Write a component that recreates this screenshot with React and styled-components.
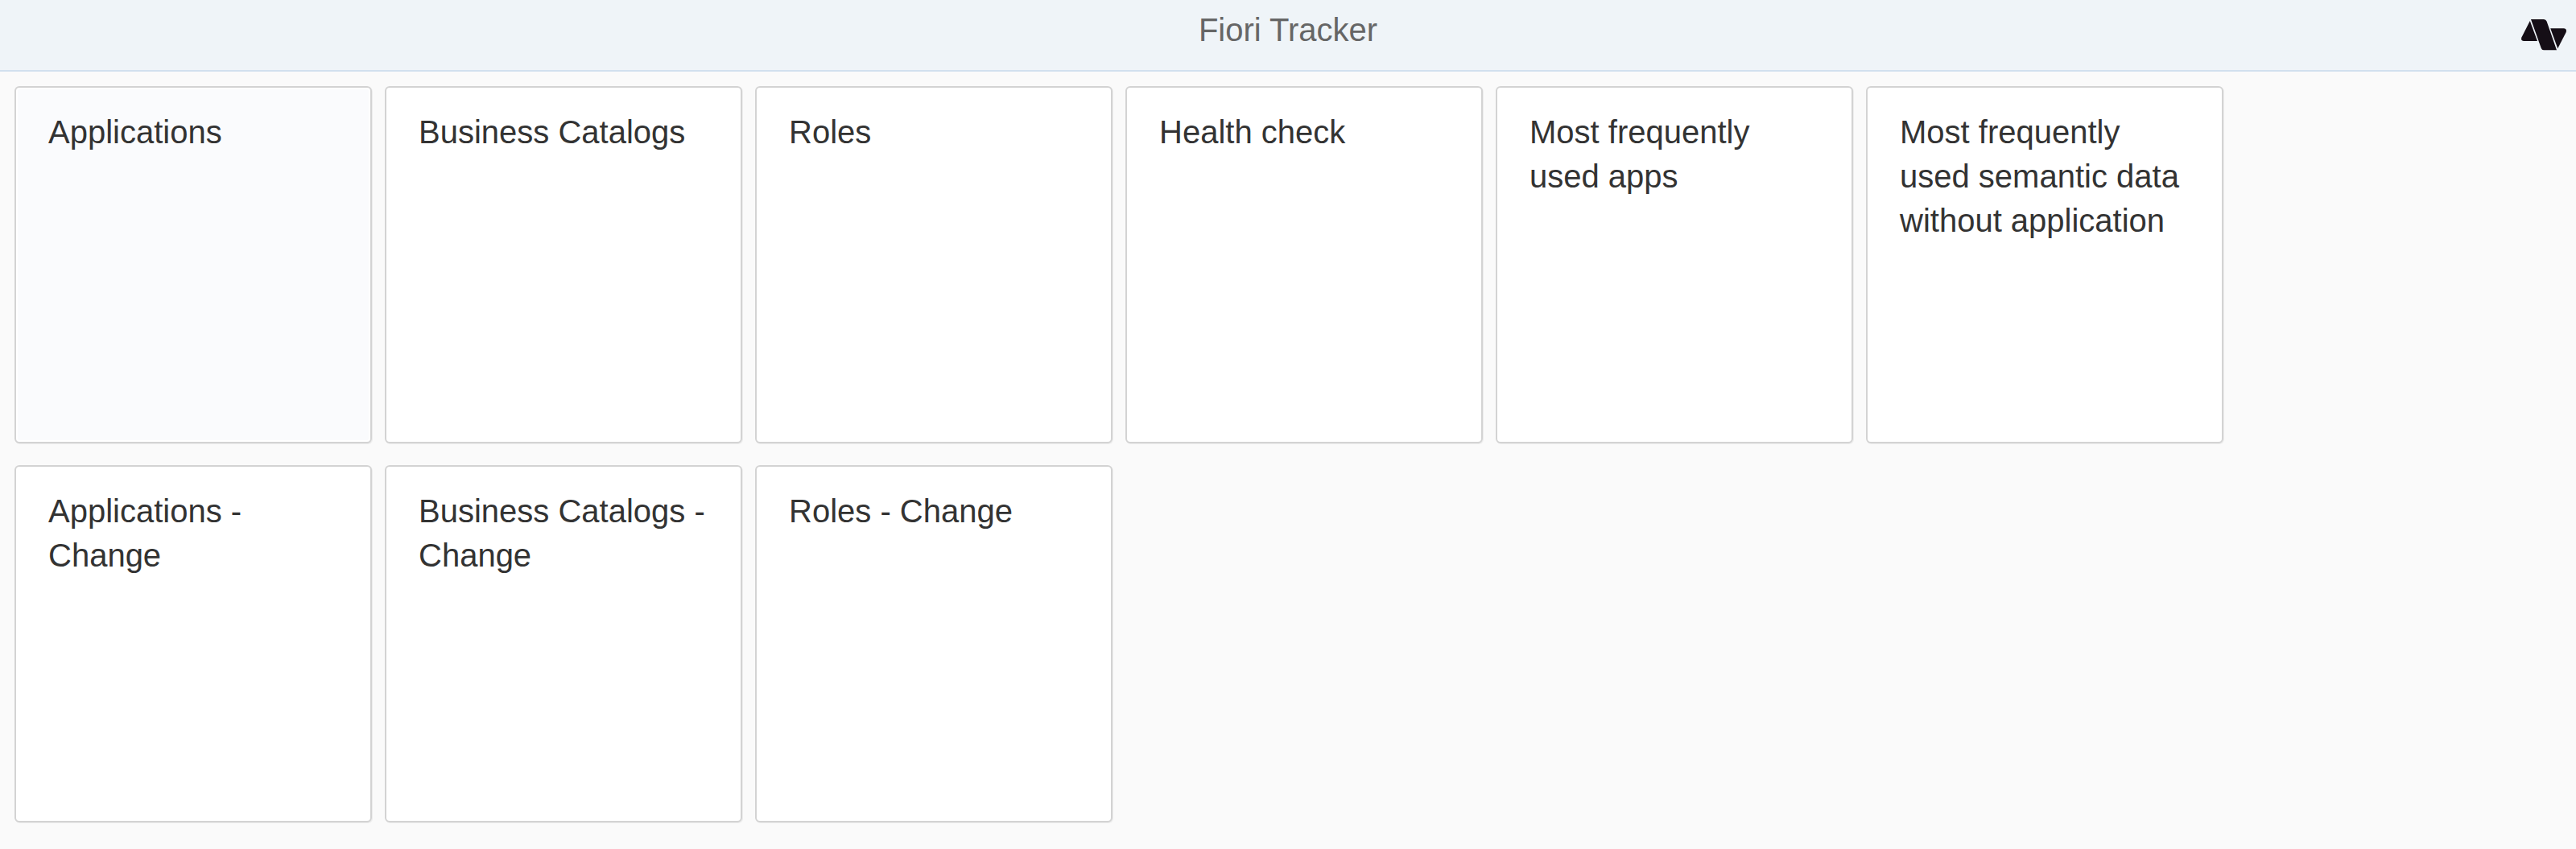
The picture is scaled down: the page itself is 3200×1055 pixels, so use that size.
import React from "react";
import styled, { createGlobalStyle } from "styled-components";

const GlobalStyle = createGlobalStyle`
  body {
    margin: 0;
    background: #fafafa;
    font-family: "Liberation Sans", Arial, sans-serif;
  }
`;

const Page = styled.div`
  display: flex;
  flex-direction: column;
  min-height: 1055px;
`;

const Header = styled.header`
  display: grid;
  grid-template-columns: 1fr auto 1fr;
  box-sizing: border-box;
  height: 89px;
  background: #eff4f8;
  border-bottom: 2px solid #d1e0ee;
`;

const Title = styled.h1`
  grid-column: 2;
  margin: 0;
  padding-top: 10px;
  font-size: 40px;
  font-weight: 400;
  line-height: 55px;
  color: #666666;
`;

const Logo = styled.svg`
  display: block;
  justify-self: end;
  width: 60px;
  height: 42px;
  margin: 22px 10px 0 0;
`;

const TileRows = styled.main`
  display: flex;
  flex-direction: column;
  gap: 27px;
  padding: 18px;
`;

const TileRow = styled.section`
  display: flex;
  gap: 16px;
`;

const Tile = styled.article`
  box-sizing: border-box;
  width: 444px;
  height: 444px;
  padding: 28px 40px;
  border: 2px solid #d3d3d3;
  border-radius: 6px;
  background: ${(p) => (p.$active ? "#fafbfd" : "#ffffff")};
  box-shadow: ${(p) => (p.$active ? "inset 0 0 0 2px #ffffff, " : "")}1px 1px 0 #ededed;
`;

const TileTitle = styled.h2`
  margin: 0;
  font-size: 40px;
  font-weight: 400;
  line-height: 55px;
  color: #333333;
`;

const rows = [
  [
    "Applications",
    "Business Catalogs",
    "Roles",
    "Health check",
    "Most frequently used apps",
    "Most frequently used semantic data without application",
  ],
  ["Applications - Change", "Business Catalogs - Change", "Roles - Change"],
];

export default function App() {
  return (
    <Page>
      <GlobalStyle />
      <Header>
        <Title>Fiori Tracker</Title>
        <Logo viewBox="3130 22 60 42" fill="#150e16" aria-hidden="true">
          <path d="M3142.8 26 L3152 51 H3135 Q3131 50.5 3132.4 46.5 Z" />
          <path d="M3144 24 H3160 Q3162.6 24 3163.6 26.5 L3176 62.3 H3160 Q3157.6 62.3 3156.8 60 Z" />
          <path d="M3168.2 35.3 H3185 Q3189 36 3187.7 40 L3177.3 60.3 Z" />
        </Logo>
      </Header>
      <TileRows>
        {rows.map((titles) => (
          <TileRow key={titles[0]}>
            {titles.map((title) => (
              <Tile key={title} $active={title === "Applications"}>
                <TileTitle>{title}</TileTitle>
              </Tile>
            ))}
          </TileRow>
        ))}
      </TileRows>
    </Page>
  );
}
